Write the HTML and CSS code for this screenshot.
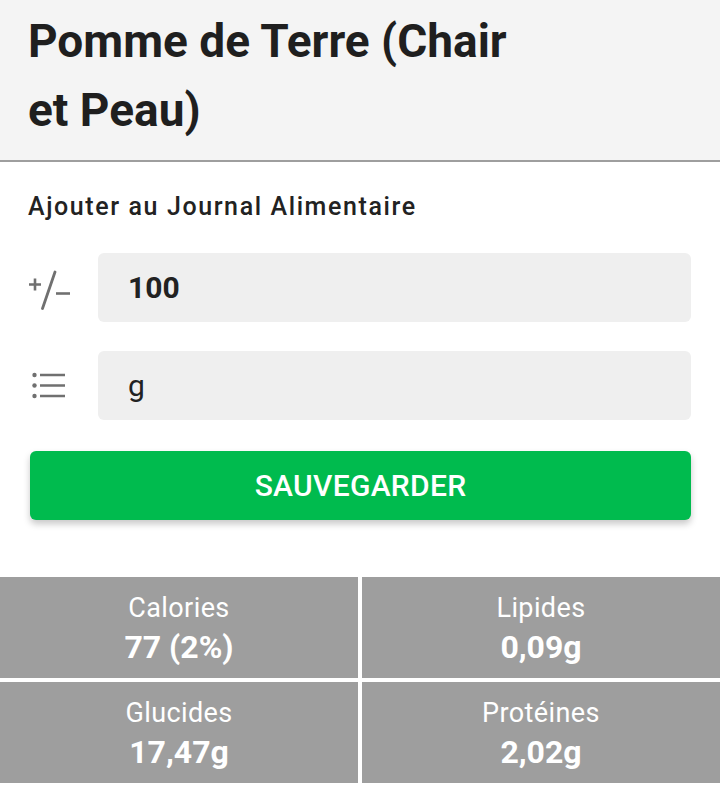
FILE: index.html
```html
<!DOCTYPE html>
<html lang="fr">
<head>
<meta charset="utf-8">
<title>Pomme de Terre</title>
<link rel="stylesheet" href="styles.css">
</head>
<body>
<header class="header">
  <h1 class="title">Pomme de Terre (Chair<br>et Peau)</h1>
</header>
<section class="journal">
  <h2 class="subtitle">Ajouter au Journal Alimentaire</h2>
  <div class="row">
    <div class="icon">
      <svg width="44" height="44" viewBox="0 0 44 44">
        <path d="M1 18.5h12M7 12.5v12" stroke="#707070" stroke-width="2.6" fill="none"/>
        <path d="M27 6L14.5 42.5" stroke="#707070" stroke-width="2.8" stroke-linecap="round" fill="none"/>
        <path d="M28 27.5h14" stroke="#707070" stroke-width="2.6" fill="none"/>
      </svg>
    </div>
    <div class="field field-bold">100</div>
  </div>
  <div class="row">
    <div class="icon">
      <svg width="44" height="40" viewBox="0 0 44 40">
        <circle cx="6.5" cy="9" r="2.2" fill="#707070"/>
        <circle cx="6.5" cy="19.5" r="2.2" fill="#707070"/>
        <circle cx="6.5" cy="30" r="2.2" fill="#707070"/>
        <path d="M12 9h25M12 19.5h25M12 30h25" stroke="#707070" stroke-width="2.6" fill="none"/>
      </svg>
    </div>
    <div class="field">g</div>
  </div>
  <button class="save">SAUVEGARDER</button>
</section>
<section class="stats">
  <div class="cell"><div class="label">Calories</div><div class="value">77 (2%)</div></div>
  <div class="cell"><div class="label">Lipides</div><div class="value">0,09g</div></div>
  <div class="cell"><div class="label">Glucides</div><div class="value">17,47g</div></div>
  <div class="cell"><div class="label">Protéines</div><div class="value">2,02g</div></div>
</section>
</body>
</html>
```
FILE: styles.css
```css
* { box-sizing: border-box; }
html, body { margin: 0; padding: 0; background: #ffffff; }
body { font-family: Roboto, "Liberation Sans", sans-serif; color: #212121; width: 720px; }

.header {
  background: #f4f4f4;
  border-bottom: 2px solid #9e9e9e;
  height: 162px;
  padding: 7px 28px 0;
}
.title {
  margin: 0;
  font-size: 46px;
  font-weight: 700;
  line-height: 69px;
  color: #1f1f1f;
  letter-spacing: 0;
}

.journal { padding: 32px 29px 0 28px; }
.subtitle {
  margin: 0 0 33px;
  font-size: 25px;
  font-weight: 500;
  line-height: 26px;
  color: #222;
  letter-spacing: 1.6px;
}
.row {
  display: flex;
  align-items: center;
  margin-bottom: 29px;
}
.icon {
  width: 70px;
  display: flex;
  align-items: center;
}
.field {
  flex: 1;
  height: 69px;
  background: #efefef;
  border-radius: 6px;
  padding-left: 30px;
  display: flex;
  align-items: center;
  font-size: 30px;
  color: #222;
}
.field-bold { font-weight: 700; }

.save {
  display: block;
  width: 661px;
  margin: 31px 0 0 2px;
  height: 69px;
  border: none;
  border-radius: 6px;
  background: #00bb4e;
  color: #ffffff;
  font-family: Roboto, "Liberation Sans", sans-serif;
  font-size: 30px;
  font-weight: 500;
  letter-spacing: 0.3px;
  box-shadow: 0 4px 7px rgba(0, 0, 0, 0.22);
  cursor: pointer;
}

.stats {
  margin-top: 57px;
  display: grid;
  grid-template-columns: 358px 358px;
  column-gap: 4px;
  row-gap: 4px;
}
.cell {
  background: #9e9e9e;
  height: 101px;
  color: #ffffff;
  text-align: center;
  padding-top: 16px;
}
.label { font-size: 27px; line-height: 30px; letter-spacing: 0.4px; }
.value { font-size: 32px; font-weight: 700; line-height: 40px; margin-top: 4px; }
```
